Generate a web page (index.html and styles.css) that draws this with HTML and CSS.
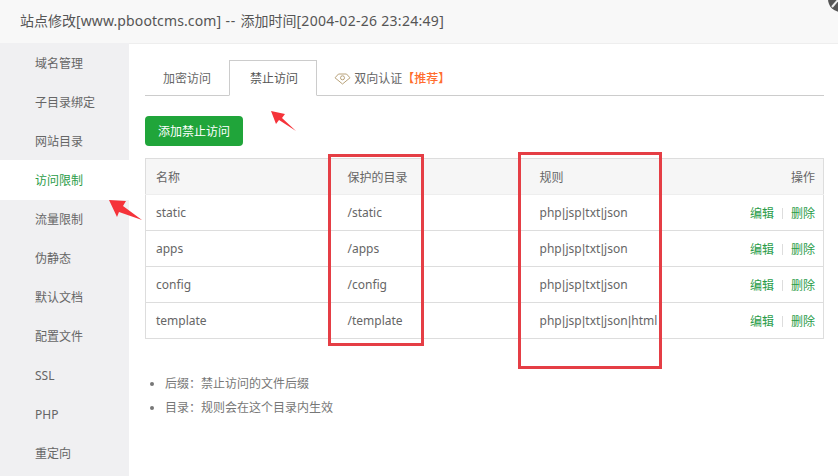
FILE: index.html
```html
<!DOCTYPE html>
<html lang="zh-CN">
<head>
    <meta charset="UTF-8">
    <meta name="viewport" content="width=device-width, initial-scale=1.0">
    <title>站点修改</title>
    <link rel="stylesheet" href="styles.css">
</head>
<body>
    <div class="dialog">
        <div class="dialog-title">站点修改<span class="t-domain">[www.pbootcms.com]</span><span class="t-dash"> -- </span>添加时间<span class="t-time">[2004-02-26 23:24:49]</span></div>
        <div class="dialog-body">
            <ul class="side-menu">
                <li>域名管理</li>
                <li>子目录绑定</li>
                <li>网站目录</li>
                <li class="active">访问限制</li>
                <li>流量限制</li>
                <li>伪静态</li>
                <li>默认文档</li>
                <li>配置文件</li>
                <li>SSL</li>
                <li>PHP</li>
                <li>重定向</li>
            </ul>
            <div class="content">
                <div class="tabs">
                    <div class="tab">加密访问</div>
                    <div class="tab active">禁止访问</div>
                    <div class="tab">
                        <svg class="gem" width="17" height="12" viewBox="0 0 17 12">
                            <path d="M4.5 1H12.5L16 4.8L8.5 11L1 4.8Z" fill="none" stroke="#b8a27a" stroke-width="1"/>
                            <circle cx="8.5" cy="4.8" r="2" fill="none" stroke="#b8a27a" stroke-width="1"/>
                        </svg>
                        双向认证<span class="recommend">【推荐】</span>
                    </div>
                </div>
                <button class="btn-add">添加禁止访问</button>
                <table class="rules">
                    <thead>
                        <tr><th>名称</th><th>保护的目录</th><th>规则</th><th class="ops">操作</th></tr>
                    </thead>
                    <tbody>
                        <tr><td>static</td><td>/static</td><td>php<b>|</b>jsp<b>|</b>txt<b>|</b>json</td><td class="ops"><a>编辑</a><i></i><a>删除</a></td></tr>
                        <tr><td>apps</td><td>/apps</td><td>php<b>|</b>jsp<b>|</b>txt<b>|</b>json</td><td class="ops"><a>编辑</a><i></i><a>删除</a></td></tr>
                        <tr><td>config</td><td>/config</td><td>php<b>|</b>jsp<b>|</b>txt<b>|</b>json</td><td class="ops"><a>编辑</a><i></i><a>删除</a></td></tr>
                        <tr><td>template</td><td>/template</td><td>php<b>|</b>jsp<b>|</b>txt<b>|</b>json<b>|</b>html</td><td class="ops"><a>编辑</a><i></i><a>删除</a></td></tr>
                    </tbody>
                </table>
                <ul class="tips">
                    <li>后缀：禁止访问的文件后缀</li>
                    <li>目录：规则会在这个目录内生效</li>
                </ul>
            </div>
        </div>
    </div>

    <!-- annotations drawn over the screenshot -->
    <div class="mark mark-dir"></div>
    <div class="mark mark-rule"></div>
    <svg class="arrows" width="838" height="476" viewBox="0 0 838 476">
        <polygon points="271,111 285,114 282,118 296,131 279,120 276,124" fill="#f5333a"/>
        <polygon points="109,200 126,201 123,206 142,220 119,212 117,217" fill="#f5333a"/>
        <circle cx="841" cy="-1" r="13" fill="#555"/>
        <path d="M838 0L832 7" stroke="#eee" stroke-width="2" fill="none"/>
    </svg>
</body>
</html>
```

FILE: styles.css
```css
* {
    box-sizing: border-box;
}
html, body {
    margin: 0;
    padding: 0;
    height: 476px;
    overflow: hidden;
}
body {
    font-family: "Noto Sans", "Noto Sans CJK SC", sans-serif;
    font-size: 12px;
    color: #666;
    background: #fff;
    position: relative;
}
ul {
    list-style: none;
    margin: 0;
    padding: 0;
}
.dialog-title {
    height: 44px;
    line-height: 42px;
    padding-left: 20px;
    font-size: 14px;
    color: #555;
    background: #f8f8f8;
    border-bottom: 1px solid #eee;
    white-space: pre;
}
.t-domain {
    letter-spacing: .11px;
}
.t-dash {
    letter-spacing: .75px;
}
.t-time {
    letter-spacing: .29px;
}
.dialog-body {
    display: flex;
    height: 433px;
    margin-top: -1px;
}
.side-menu {
    width: 129px;
    flex: none;
    background: #f0f0f2;
}
.side-menu li {
    height: 39px;
    line-height: 42px;
    padding-left: 35px;
    color: #666;
}
.side-menu li.active {
    background: #fff;
    color: #2a9c48;
    height: 40px;
    margin-bottom: -1px;
}
.content {
    flex: 1;
    padding: 17px 14px 0 16px;
}
.tabs {
    display: flex;
    height: 36px;
    border-bottom: 1px solid #ccc;
}
.tab {
    height: 36px;
    line-height: 37px;
    padding: 0 18px;
    color: #666;
    white-space: nowrap;
}
.tab.active {
    width: 88px;
    padding: 0 0 0 20px;
    line-height: 35px;
    color: #555;
    background: #fff;
    border: 1px solid #ccc;
    border-bottom: 1px solid #fff;
}
.gem {
    vertical-align: -2px;
    margin-left: -1px;
}
.recommend {
    color: #ff6d2e;
    font-weight: 500;
}
.btn-add {
    display: block;
    margin-top: 20px;
    width: 98px;
    height: 30px;
    padding: 0;
    border: none;
    border-radius: 4px;
    background: #20a53a;
    color: #fff;
    font: inherit;
}
.rules {
    margin-top: 12px;
    width: 679px;
    table-layout: fixed;
    border-collapse: collapse;
    border: 1px solid #ddd;
}
.rules th, .rules td {
    height: 36px;
    padding: 0 10px;
    text-align: left;
    font-weight: normal;
    border-bottom: 1px solid #ddd;
    white-space: nowrap;
}
.rules th {
    background: #f6f6f6;
    border-bottom-color: #eee;
}
.rules th:nth-child(1), .rules th:nth-child(2), .rules th:nth-child(3) {
    width: 192px;
}
.rules b {
    font-family: "Liberation Sans", sans-serif;
    font-weight: normal;
    margin: 0 .3px;
}
.rules .ops {
    text-align: right;
    padding-right: 8px;
}
.rules a {
    color: #2a9c48;
}
.rules i {
    display: inline-block;
    width: 1px;
    height: 11px;
    margin: 0 8px;
    background: #ddd;
    vertical-align: -1px;
}
.tips {
    margin-top: 33px;
    padding-left: 20px;
    list-style: disc;
    color: #777;
}
.tips li {
    height: 24px;
    line-height: 24px;
}
.tips li::marker {
    font-size: 11px;
}
.mark {
    position: absolute;
    border: 3px solid #e53e45;
}
.mark-dir {
    left: 328px;
    top: 154px;
    width: 96px;
    height: 192px;
}
.mark-rule {
    left: 518px;
    top: 152px;
    width: 144px;
    height: 217px;
}
.arrows {
    position: absolute;
    left: 0;
    top: 0;
}
```
